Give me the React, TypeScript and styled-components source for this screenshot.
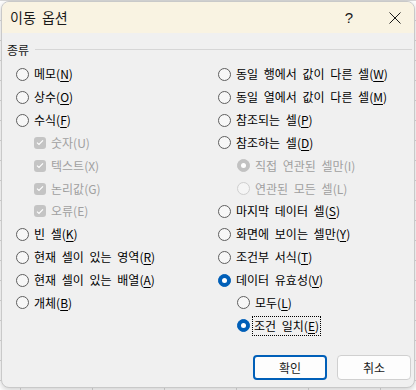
import styled, { createGlobalStyle } from "styled-components";

const GlobalStyle = createGlobalStyle`
  html, body {
    margin: 0;
    padding: 0;
    width: 416px;
    height: 390px;
    overflow: hidden;
    background-color: #ffffff;
    background-image:
      linear-gradient(to right, #d9d9d9 1px, transparent 1px),
      linear-gradient(to bottom, #d9d9d9 1px, transparent 1px);
    background-size: 72px 20px;
    background-position: 20px 0;
    font-family: "Noto Sans CJK KR", "Noto Sans", sans-serif;
  }
`;

const Dialog = styled.div`
  margin: 1px 0 0 1px;
  width: 414px;
  height: 387px;
  box-sizing: border-box;
  border: 1px solid #c9c9c9;
  border-radius: 8px;
  background: #f0f0f0;
  box-shadow: 0 2px 6px rgba(0, 0, 0, 0.2);
  overflow: hidden;
  display: flex;
  flex-direction: column;
`;

const TitleBar = styled.div`
  height: 31px;
  background: #f9f3e2;
  display: flex;
  align-items: center;
  padding-left: 8px;
  flex-shrink: 0;
`;

const Title = styled.div`
  flex: 1;
  font-size: 14px;
  word-spacing: 3px;
  color: #1a1a1a;
  margin-top: -1px;
`;

const TitleButton = styled.div<{ $gapRight?: number }>`
  width: 38px;
  height: 31px;
  margin-right: ${(p) => p.$gapRight ?? 0}px;
  display: flex;
  align-items: center;
  justify-content: center;
  font-family: "Liberation Sans", sans-serif;
  font-size: 15px;
  color: #1a1a1a;
`;

const Body = styled.div`
  flex: 1;
  padding: 8px 0 0 5px;
  display: flex;
  flex-direction: column;
`;

const GroupHeader = styled.div`
  display: flex;
  align-items: center;
  height: 16px;
  gap: 6px;
  padding-right: 2px;
  font-size: 12px;
  color: #1a1a1a;
`;

const GroupLine = styled.div`
  flex: 1;
  height: 1px;
  background: #d6d6d6;
`;

const Columns = styled.div`
  display: grid;
  grid-template-columns: 202px 1fr;
  margin-top: 6px;
  padding-left: 9px;
`;

const Column = styled.div`
  display: flex;
  flex-direction: column;
`;

const Row = styled.div<{ $indent: number }>`
  height: 22.85px;
  display: flex;
  align-items: center;
  padding-left: ${(p) => p.$indent}px;
  font-size: 12px;
`;

const RadioCircle = styled.span<{ $checked: boolean; $disabled: boolean }>`
  width: 13px;
  height: 13px;
  box-sizing: border-box;
  border-radius: 50%;
  flex-shrink: 0;
  position: relative;
  border: 1px solid
    ${(p) =>
      p.$checked ? (p.$disabled ? "#c2c2c2" : "#005fb8") : p.$disabled ? "#cfcfcf" : "#5f5f5f"};
  background: ${(p) =>
    p.$checked ? (p.$disabled ? "#c2c2c2" : "#005fb8") : p.$disabled ? "#f5f5f5" : "#f7f7f7"};

  &::after {
    content: "";
    display: ${(p) => (p.$checked ? "block" : "none")};
    position: absolute;
    left: 50%;
    top: 50%;
    width: 5px;
    height: 5px;
    margin: -2.5px 0 0 -2.5px;
    border-radius: 50%;
    background: #ffffff;
  }
`;

const CheckBox = styled.span`
  width: 12px;
  height: 12px;
  border-radius: 3px;
  background: #c4c4c4;
  flex-shrink: 0;
  display: flex;
  align-items: center;
  justify-content: center;
`;

const Label = styled.span<{ $disabled: boolean; $focused: boolean }>`
  margin-left: ${(p) => (p.$focused ? 3 : 5)}px;
  color: ${(p) => (p.$disabled ? "#a0a0a0" : "#000000")};
  white-space: nowrap;
  word-spacing: 3px;
  line-height: 16px;
  padding: ${(p) => (p.$focused ? "1px 1px" : "0")};
  outline: ${(p) => (p.$focused ? "1px dotted #000" : "none")};

  u {
    text-underline-offset: 2px;
  }
`;

const Footer = styled.div`
  display: flex;
  justify-content: flex-end;
  gap: 10px;
  margin-top: auto;
  padding: 0 3px 7px 0;
`;

const Button = styled.button<{ $primary?: boolean }>`
  width: 74px;
  height: 25px;
  box-sizing: border-box;
  border-radius: 4px;
  background: #fdfdfd;
  border: ${(p) => (p.$primary ? "2px solid #005fb8" : "1px solid #d0d0d0")};
  font-family: "Noto Sans CJK KR", sans-serif;
  font-size: 12px;
  color: #1a1a1a;
  padding: 0;
`;

type Item = {
  text: string;
  key: string;
  kind?: "radio" | "check";
  indent?: number;
  checked?: boolean;
  disabled?: boolean;
  focused?: boolean;
};

const leftItems: Item[] = [
  { text: "메모", key: "N" },
  { text: "상수", key: "O" },
  { text: "수식", key: "F" },
  { text: "숫자", key: "U", kind: "check", indent: 18, checked: true, disabled: true },
  { text: "텍스트", key: "X", kind: "check", indent: 18, checked: true, disabled: true },
  { text: "논리값", key: "G", kind: "check", indent: 18, checked: true, disabled: true },
  { text: "오류", key: "E", kind: "check", indent: 18, checked: true, disabled: true },
  { text: "빈 셀", key: "K" },
  { text: "현재 셀이 있는 영역", key: "R" },
  { text: "현재 셀이 있는 배열", key: "A" },
  { text: "개체", key: "B" },
];

const rightItems: Item[] = [
  { text: "동일 행에서 값이 다른 셀", key: "W" },
  { text: "동일 열에서 값이 다른 셀", key: "M" },
  { text: "참조되는 셀", key: "P" },
  { text: "참조하는 셀", key: "D" },
  { text: "직접 연관된 셀만", key: "I", indent: 19, checked: true, disabled: true },
  { text: "연관된 모든 셀", key: "L", indent: 19, disabled: true },
  { text: "마지막 데이터 셀", key: "S" },
  { text: "화면에 보이는 셀만", key: "Y" },
  { text: "조건부 서식", key: "T" },
  { text: "데이터 유효성", key: "V", checked: true },
  { text: "모두", key: "L", indent: 19 },
  { text: "조건 일치", key: "E", indent: 19, checked: true, focused: true },
];

function Option({ item }: { item: Item }) {
  const disabled = !!item.disabled;
  return (
    <Row $indent={item.indent ?? 0}>
      {item.kind === "check" ? (
        <CheckBox>
          <svg width="8" height="7" viewBox="0 0 8 7">
            <path d="M1 3.6 L3 5.5 L7 1.3" fill="none" stroke="#fff" strokeWidth="1.2" />
          </svg>
        </CheckBox>
      ) : (
        <RadioCircle $checked={!!item.checked} $disabled={disabled} />
      )}
      <Label $disabled={disabled} $focused={!!item.focused}>
        {item.text}(
        {disabled ? item.key : <u>{item.key}</u>})
      </Label>
    </Row>
  );
}

export default function App() {
  return (
    <>
      <GlobalStyle />
      <Dialog>
        <TitleBar>
          <Title>이동 옵션</Title>
          <TitleButton $gapRight={8}>?</TitleButton>
          <TitleButton>
            <svg width="12" height="12" viewBox="0 0 12 12">
              <path d="M0.5 0.5 L11.5 11.5 M11.5 0.5 L0.5 11.5" stroke="#1a1a1a" strokeWidth="1" />
            </svg>
          </TitleButton>
        </TitleBar>
        <Body>
          <GroupHeader>
            종류
            <GroupLine />
          </GroupHeader>
          <Columns>
            <Column>
              {leftItems.map((it) => (
                <Option key={it.text} item={it} />
              ))}
            </Column>
            <Column>
              {rightItems.map((it) => (
                <Option key={it.text} item={it} />
              ))}
            </Column>
          </Columns>
          <Footer>
            <Button $primary>확인</Button>
            <Button>취소</Button>
          </Footer>
        </Body>
      </Dialog>
    </>
  );
}
